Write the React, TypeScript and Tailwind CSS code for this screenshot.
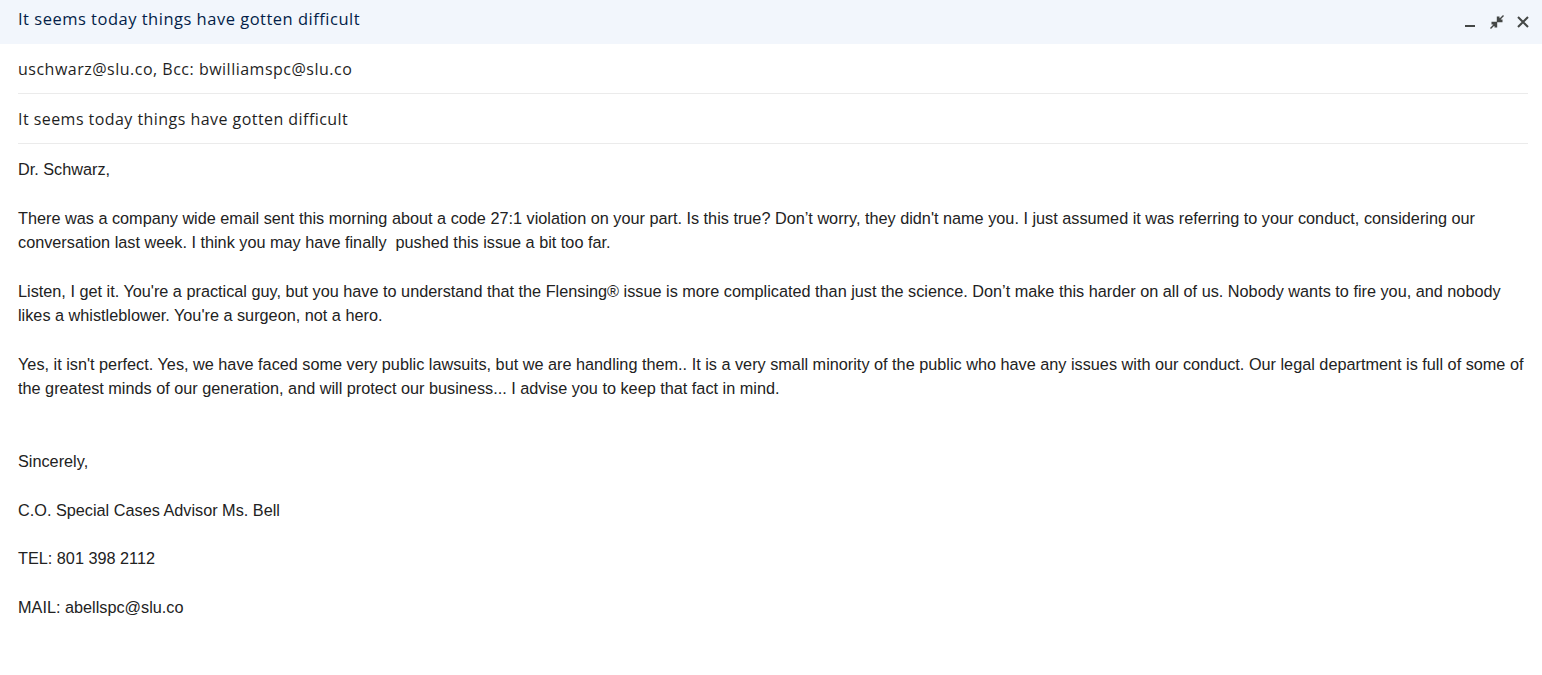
import React from "react";

function Minimize() {
  return (
    <svg width="14" height="14" viewBox="0 0 14 14" fill="none">
      <rect x="1" y="10" width="10" height="2" fill="#444746" />
    </svg>
  );
}

function Shrink() {
  return (
    <svg width="16" height="16" viewBox="0 0 16 16" fill="#444746">
      <path d="M14.5 1.5 L9.8 6.2 L9.8 3.2 L8.5 3.2 L8.5 7.5 L12.8 7.5 L12.8 6.2 L9.8 6.2" stroke="#444746" strokeWidth="1.4" fill="none" />
      <path d="M1.5 14.5 L6.2 9.8 L6.2 12.8 L7.5 12.8 L7.5 8.5 L3.2 8.5 L3.2 9.8 L6.2 9.8" stroke="#444746" strokeWidth="1.4" fill="none" />
    </svg>
  );
}

function Close() {
  return (
    <svg width="14" height="14" viewBox="0 0 14 14" fill="none">
      <path d="M2 2 L12 12 M12 2 L2 12" stroke="#444746" strokeWidth="2" />
    </svg>
  );
}

export default function App() {
  const body = "font-['Liberation_Sans',Arial,sans-serif] text-[16.25px] leading-[24.33px] text-[#222222]";
  return (
    <div className="w-[1542px] h-[675px] bg-white overflow-hidden">
      <div className="h-[44px] bg-[#f2f6fc] flex items-center justify-between pl-[18px] pr-[12px] pb-[5px]">
        <div className="font-['Open_Sans',sans-serif] text-[16.5px] font-medium tracking-[0.5px] text-[#041e49]">
          It seems today things have gotten difficult
        </div>
        <div className="flex items-center gap-[11px] pt-[5px]">
          <Minimize />
          <Shrink />
          <Close />
        </div>
      </div>
      <div className="pl-[18px] pr-[14px]">
        <div className="h-[50px] flex items-center border-b border-[#ebebeb] font-['Open_Sans',sans-serif] text-[16px] tracking-[0.5px] text-[#1f1f1f] pt-[1px]">
          uschwarz@slu.co, Bcc: bwilliamspc@slu.co
        </div>
        <div className="h-[50px] flex items-center border-b border-[#ebebeb] font-['Open_Sans',sans-serif] text-[16px] tracking-[0.45px] text-[#1f1f1f] pt-[1px]">
          It seems today things have gotten difficult
        </div>
        <div className={`${body} pt-[13px]`}>
          <div>Dr. Schwarz,</div>
          <div><br /></div>
          <div>
            There was a company wide email sent this morning about a code 27:1 violation on your part. Is this true? Don’t worry, they didn't name you. I just assumed it was referring to your conduct, considering our conversation last week. I think you may have finally&nbsp; pushed this issue a bit too far.
          </div>
          <div><br /></div>
          <div>
            Listen, I get it. You're a practical guy, but you have to understand that the Flensing® issue is more complicated than just the science. Don’t make this harder on all of us. Nobody wants to fire you, and nobody likes a whistleblower. You're a surgeon, not a hero.
          </div>
          <div><br /></div>
          <div>
            Yes, it isn't perfect. Yes, we have faced some very public lawsuits, but we are handling them.. It is a very small minority of the public who have any issues with our conduct. Our legal department is full of some of the greatest minds of our generation, and will protect our business... I advise you to keep that fact in mind.
          </div>
          <div><br /></div>
          <div><br /></div>
          <div>Sincerely,</div>
          <div><br /></div>
          <div>C.O. Special Cases Advisor Ms. Bell</div>
          <div><br /></div>
          <div>TEL: 801 398 2112</div>
          <div><br /></div>
          <div>MAIL: abellspc@slu.co</div>
        </div>
      </div>
    </div>
  );
}
